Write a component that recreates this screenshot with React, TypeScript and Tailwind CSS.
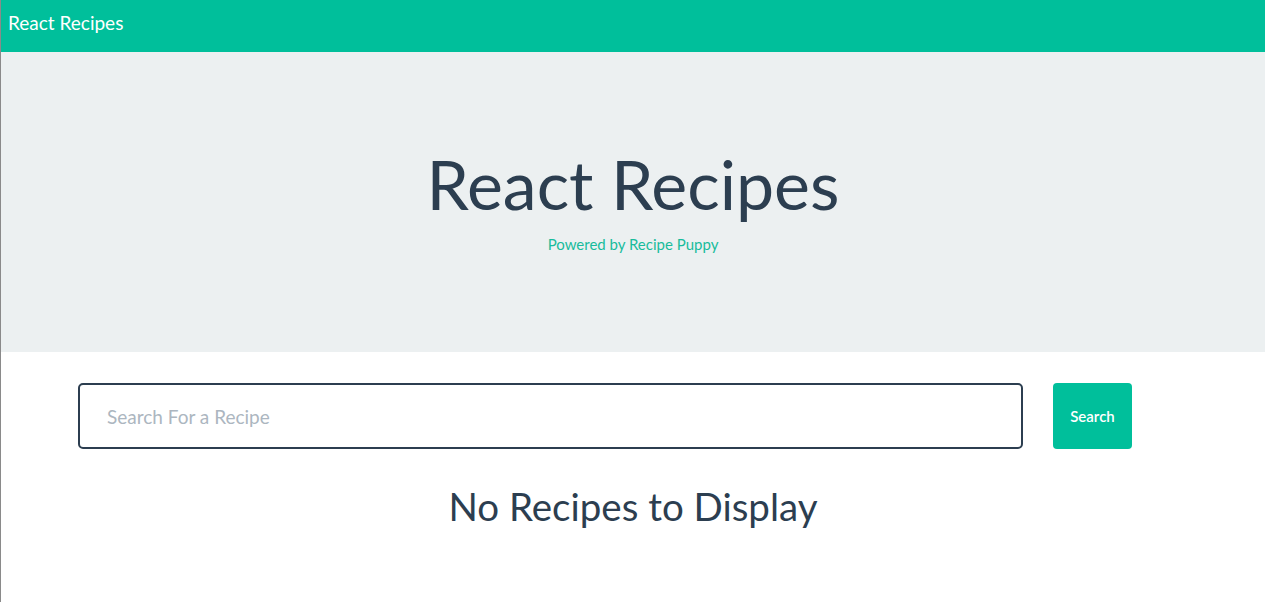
export default function App() {
  return (
    <div
      className="min-h-[602px] border-l border-[#8a8a8a] bg-white text-[#2c3e50]"
      style={{ fontFamily: "Lato, 'Open Sans', sans-serif" }}
    >
      <nav className="flex h-[52px] items-center bg-[#00bf9b] px-[7px] pb-[6px]">
        <span className="text-[19px] text-white">React Recipes</span>
      </nav>

      <header className="flex h-[300px] flex-col items-center bg-[#ecf0f1] pt-[98px]">
        <h1 className="text-[68px] leading-none">React Recipes</h1>
        <p className="mt-[15px] text-[15px] text-[#18bc9c]">Powered by Recipe Puppy</p>
      </header>

      <main className="pt-[31px]">
        <form className="flex gap-[30px] pl-[77px]" onSubmit={(e) => e.preventDefault()}>
          <input
            type="text"
            autoFocus
            placeholder="Search For a Recipe"
            className="h-[66px] w-[945px] rounded-[5px] border-2 border-[#2c3e50] px-[27px] text-[19px] caret-[#2c3e50] placeholder:text-[#acb6c0] focus:outline-none"
          />
          <button
            type="submit"
            className="h-[66px] w-[79px] rounded-[4px] bg-[#00bf9b] text-[15px] font-semibold text-white"
          >
            Search
          </button>
        </form>

        <h2 className="mt-[29px] text-center text-[38.5px]">No Recipes to Display</h2>
      </main>
    </div>
  );
}
